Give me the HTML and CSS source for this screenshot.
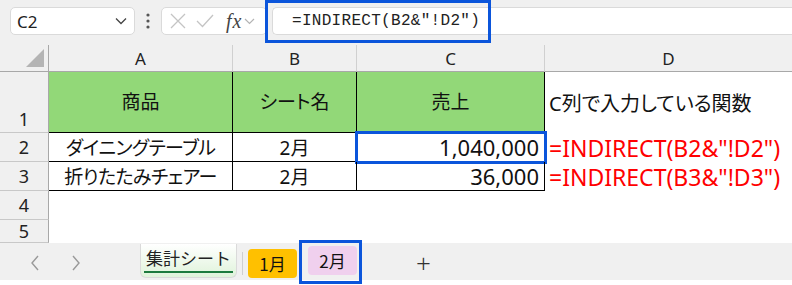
FILE: index.html
```html
<!DOCTYPE html>
<html lang="ja">
<head>
    <meta charset="UTF-8">
    <title>INDIRECT</title>
    <link rel="stylesheet" href="styles.css">
</head>
<body>
    <div class="formula-bar">
        <div class="name-box">
            <span>C2</span>
            <svg class="chev" width="12" height="8" viewBox="0 0 12 8"><path d="M1 1.5 L6 6.5 L11 1.5" fill="none" stroke="#444" stroke-width="1.3"/></svg>
        </div>
        <svg class="dots" width="6" height="16" viewBox="0 0 6 16"><circle cx="3" cy="2" r="1.6" fill="#555"/><circle cx="3" cy="8" r="1.6" fill="#555"/><circle cx="3" cy="14" r="1.6" fill="#555"/></svg>
        <div class="fx-box">
            <svg width="16" height="16" viewBox="0 0 16 16"><path d="M1 1 L15 15 M15 1 L1 15" stroke="#c4c4c4" stroke-width="1.3"/></svg>
            <svg width="18" height="14" viewBox="0 0 18 14"><path d="M1 7 L6.5 12.5 L17 1" fill="none" stroke="#c4c4c4" stroke-width="1.3"/></svg>
            <span class="fx">fx</span>
            <svg width="11" height="7" viewBox="0 0 11 7"><path d="M1 1 L5.5 5.5 L10 1" fill="none" stroke="#b4b4b4" stroke-width="1.2"/></svg>
        </div>
        <div class="formula-input">
            <span>=INDIRECT(B2&amp;"!D2")</span>
        </div>
        <div class="mark-formula"></div>
    </div>

    <div class="sheet">
        <div class="corner"><span class="tri"></span></div>
        <div class="col-head">A</div>
        <div class="col-head">B</div>
        <div class="col-head">C</div>
        <div class="col-head last">D</div>

        <div class="row-head tall">1</div>
        <div class="cell head">商品</div>
        <div class="cell head">シート名</div>
        <div class="cell head">売上</div>
        <div class="cell note">C列で入力している関数</div>

        <div class="row-head">2</div>
        <div class="cell kana">ダイニングテーブル</div>
        <div class="cell">2月</div>
        <div class="cell num selected">1,040,000</div>
        <div class="cell note red">=INDIRECT(B2&amp;"!D2")</div>

        <div class="row-head">3</div>
        <div class="cell kana">折りたたみチェアー</div>
        <div class="cell">2月</div>
        <div class="cell num">36,000</div>
        <div class="cell note red">=INDIRECT(B3&amp;"!D3")</div>

        <div class="row-head">4</div>
        <div class="blank"></div>
        <div class="row-head">5</div>
        <div class="blank"></div>
    </div>

    <div class="tabs">
        <div class="nav">
            <svg width="10" height="16" viewBox="0 0 10 16"><path d="M8 1 L2 8 L8 15" fill="none" stroke="#999" stroke-width="1.4"/></svg>
            <svg width="10" height="16" viewBox="0 0 10 16"><path d="M2 1 L8 8 L2 15" fill="none" stroke="#999" stroke-width="1.4"/></svg>
        </div>
        <div class="tab active"><span>集計シート</span></div>
        <div class="tab-sep"></div>
        <div class="tab yellow">1月</div>
        <div class="tab-mark"><div class="tab pink">2月</div></div>
        <div class="add">+</div>
    </div>
</body>
</html>
```

FILE: styles.css
```css
* {
    box-sizing: border-box;
}
body {
    margin: 0;
    width: 792px;
    height: 285px;
    overflow: hidden;
    background-color: #ffffff;
    font-family: "Noto Sans", "Noto Sans CJK JP", sans-serif;
    color: #111111;
}

/* formula bar */
.formula-bar {
    position: relative;
    height: 45px;
    background-color: #f0f0f0;
    display: flex;
    align-items: flex-start;
    padding: 7px 0 0 10px;
}
.name-box {
    width: 125px;
    height: 28px;
    background-color: #ffffff;
    border: 1px solid #dadada;
    border-radius: 5px;
    display: flex;
    align-items: center;
    justify-content: space-between;
    padding: 0 7px 0 6px;
    font-size: 17px;
    color: #222222;
}
.dots {
    margin: 6px 0 0 10px;
}
.fx-box {
    margin-left: 10px;
    width: 106px;
    height: 28px;
    background-color: #ffffff;
    border: 1px solid #dadada;
    border-radius: 5px;
    display: flex;
    align-items: center;
    padding: 0 0 0 8px;
    gap: 10px;
}
.fx-box .fx {
    font-family: "Liberation Serif", serif;
    font-style: italic;
    font-size: 20px;
    color: #444444;
    margin-left: 2px;
    letter-spacing: 1px;
}
.fx-box svg:last-child {
    margin-left: -8px;
}
.formula-input {
    margin-left: 5px;
    flex: 1;
    height: 28px;
    background-color: #ffffff;
    border: 1px solid #dadada;
    border-right: none;
    border-radius: 5px 0 0 5px;
    display: flex;
    align-items: center;
    padding-left: 19px;
    font-family: "Liberation Mono", monospace;
    font-size: 16px;
    letter-spacing: 0.3px;
    color: #222222;
}
.mark-formula {
    position: absolute;
    left: 265px;
    top: 0;
    width: 226px;
    height: 43px;
    border: 3px solid #0b55db;
}

/* grid */
.sheet {
    display: grid;
    grid-template-columns: 49px 184px 124px 188px 1fr;
    grid-template-rows: 27px 61px 29px 29px 29px 23px;
    height: 198px;
}
.corner {
    background-color: #f0f0f0;
    border-right: 1px solid #a8a8a8;
    border-bottom: 1px solid #a8a8a8;
    position: relative;
}
.tri {
    position: absolute;
    right: 4px;
    bottom: 4px;
    width: 0;
    height: 0;
    border-left: 18px solid transparent;
    border-bottom: 18px solid #b4b4b4;
}
.col-head {
    background-color: #f0f0f0;
    border-right: 1px solid #d0d0d0;
    border-bottom: 1px solid #a8a8a8;
    display: flex;
    align-items: center;
    justify-content: center;
    font-size: 17px;
    color: #222222;
    padding-top: 1px;
}
.col-head.last {
    border-right: none;
}
.row-head {
    background-color: #f0f0f0;
    border-right: 1px solid #a8a8a8;
    border-bottom: 1px solid #c8c8c8;
    display: flex;
    align-items: center;
    justify-content: center;
    font-size: 18px;
    color: #222222;
}
.row-head.tall {
    align-items: flex-end;
    padding-bottom: 1px;
}
.cell {
    border-right: 1px solid #000000;
    border-bottom: 1px solid #000000;
    display: flex;
    align-items: center;
    justify-content: center;
    font-size: 19px;
    font-feature-settings: "palt";
    white-space: nowrap;
}
.cell.kana {
    letter-spacing: -0.6px;
}
.cell.head {
    background-color: #92d878;
    padding-bottom: 2px;
}
.cell.num {
    justify-content: flex-end;
    padding-right: 5px;
    font-size: 22px;
}
.cell.selected {
    outline: 3px solid #0b55db;
    outline-offset: -1px;
}
.cell.note {
    border: none;
    justify-content: flex-start;
    padding-left: 4px;
    font-size: 20px;
}
.cell.red {
    color: #ff0000;
    font-size: 23px;
}
.blank {
    grid-column: 2 / 6;
}

/* sheet tabs */
.tabs {
    height: 37px;
    background-color: #f0f0f0;
    display: flex;
    align-items: flex-start;
}
.nav {
    width: 140px;
    display: flex;
    gap: 31px;
    padding: 12px 0 0 30px;
}
.tab {
    height: 29px;
    margin-top: 6px;
    display: flex;
    align-items: center;
    justify-content: center;
    font-family: "Noto Sans CJK JP", sans-serif;
    font-size: 17px;
    color: #111111;
    border-radius: 4px;
}
.tab.active {
    width: 97px;
    height: 34px;
    margin-top: 1px;
    background: linear-gradient(#ffffff, #dff3da);
    border: 1px solid #dadada;
    border-top: none;
    border-radius: 0 0 6px 6px;
    color: #222222;
    padding-bottom: 3px;
}
.tab.active span {
    border-bottom: 2px solid #1d7a3e;
    padding: 0 2px 1px;
}
.tab-sep {
    width: 1px;
    height: 23px;
    margin: 9px 5px 0 5px;
    background-color: #cfcfcf;
}
.tab.yellow {
    width: 49px;
    background-color: #ffc000;
}
.tab-mark {
    margin: -3px 0 0 2px;
    border: 3px solid #0b55db;
    padding: 3px 2px 3px 6px;
    height: 44px;
}
.tab.pink {
    width: 49px;
    margin-top: 0;
    background-color: #f0d0ee;
}
.add {
    margin: 2px 0 0 54px;
    font-size: 26px;
    font-weight: 300;
    color: #333333;
}
```
